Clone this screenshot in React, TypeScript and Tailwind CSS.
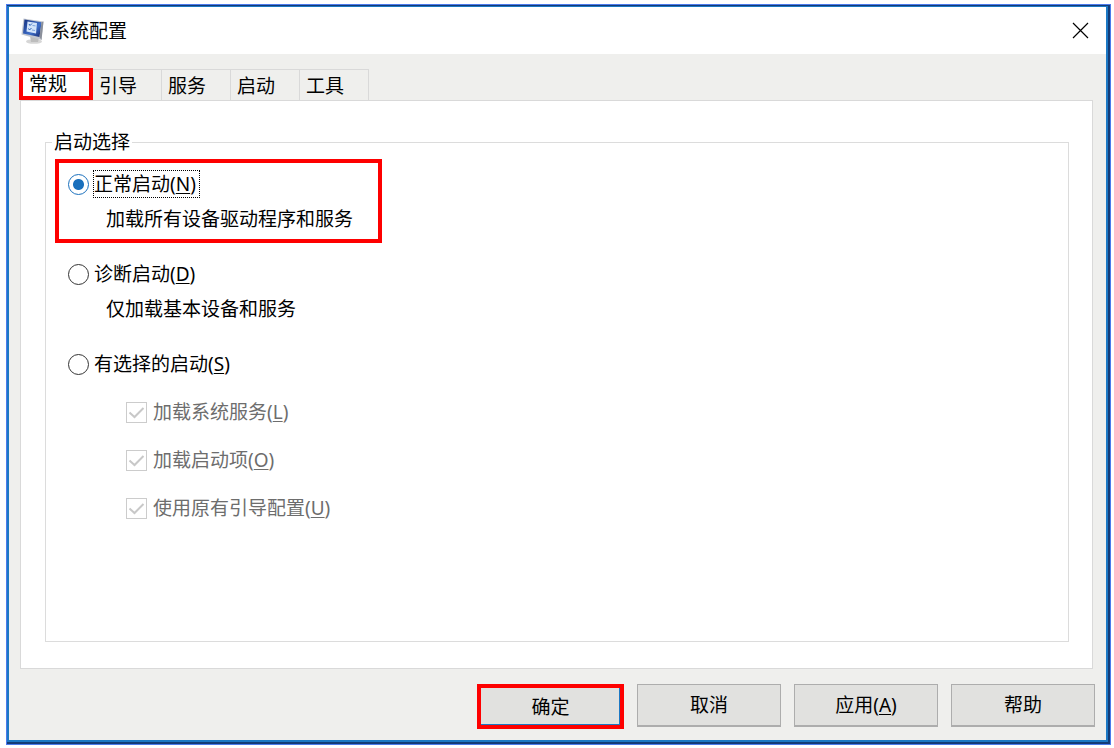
import React, { useState } from "react";

const tabs = ["常规", "引导", "服务", "启动", "工具"];

const modes = [
  { id: "normal", label: "正常启动", hotkey: "N", hint: "加载所有设备驱动程序和服务" },
  { id: "diagnostic", label: "诊断启动", hotkey: "D", hint: "仅加载基本设备和服务" },
  { id: "selective", label: "有选择的启动", hotkey: "S", hint: "" },
];

const selectiveItems = [
  { id: "services", label: "加载系统服务", hotkey: "L" },
  { id: "startup", label: "加载启动项", hotkey: "O" },
  { id: "boot", label: "使用原有引导配置", hotkey: "U" },
];

const Hotkey = ({ letter }: { letter: string }) => (
  <>
    (<span className="underline decoration-1 underline-offset-2">{letter}</span>)
  </>
);

const AppIcon = () => (
  <svg viewBox="0 0 24 26" className="h-[26px] w-6" aria-hidden="true">
    <defs>
      <linearGradient id="screen" x1="0" y1="0" x2="1" y2="1">
        <stop offset="0" stopColor="#14307f" />
        <stop offset="0.6" stopColor="#3f6fc9" />
        <stop offset="1" stopColor="#16266b" />
      </linearGradient>
    </defs>
    <ellipse cx="13" cy="23.500" rx="8" ry="2.300" fill="#d6d6d6" />
    <path d="M9 18l9 2-1 4h-7z" fill="#bdbdbd" />
    <path d="M2.500 0.500l20 3-2 18.500L.5 16.500z" fill="#c3c7cf" />
    <path d="M3.500 1.500l17 2.800-2 14.700L2 15.500z" fill="url(#screen)" />
    <path d="M6.500 3.500l9.500 1.500-1 10.500-9.500-2z" fill="#d3e4fa" />
    <path d="M8 6l1 1.500 2-2M7.500 10.500l1 1.500 2-2" fill="none" stroke="#2f62b5" />
    <path d="M11.500 7.500l3 .4M11 12l3 .5" fill="none" stroke="#7da4dc" />
    <path d="M20.500 4.300l2-.8-2 18.500-2-3z" fill="#8a8f9a" />
  </svg>
);

export default function App() {
  const [activeTab, setActiveTab] = useState(tabs[0]);
  const [mode, setMode] = useState("normal");

  return (
    <div className="flex min-h-screen bg-white pt-1 pr-[3px] pb-[3px] pl-1.5 font-['Noto_Sans','Noto_Sans_CJK_SC',sans-serif] text-[19px] leading-7 text-black">
      <div className="flex flex-1 border border-[#4b7bec] bg-[#143c78]">
        <div className="mt-px mr-0.5 mb-0.5 flex flex-1 flex-col border-2 border-t border-[#1c78c4] bg-[#efefed]">
          {/* Title bar */}
          <header className="flex h-[47px] items-center justify-between bg-white pr-[17px] pl-3">
            <div className="flex items-center gap-1.5">
              <AppIcon />
              <h1>系统配置</h1>
            </div>
            <button type="button" aria-label="关闭" className="p-0">
              <svg viewBox="0 0 17 17" className="size-[17px]" aria-hidden="true">
                <path d="M1 1l15 15M16 1L1 16" fill="none" stroke="#000" strokeWidth="1.2" />
              </svg>
            </button>
          </header>

          <main className="flex flex-1 flex-col pt-3.5 pr-[13px] pl-[11px]">
            {/* Tabs */}
            <div role="tablist" className="-ml-px flex h-8 items-end">
              {tabs.map((tab, index) => (
                <button
                  key={tab}
                  type="button"
                  role="tab"
                  aria-selected={activeTab === tab}
                  onClick={() => setActiveTab(tab)}
                  className={
                    index === 0
                      ? "h-8 w-[74px] border-4 border-[#fe0000] bg-white pl-1.5 text-left leading-6"
                      : "h-[31px] w-[69px] border-t border-r border-[#d9d9d9] pt-0.5 pl-1.5 text-left"
                  }
                >
                  {tab}
                </button>
              ))}
            </div>

            {/* General page */}
            <section role="tabpanel" className="flex flex-1 flex-col border border-[#d9d9d9] bg-white px-6 pt-[27px] pb-[26px]">
              <fieldset className="-mr-px flex-1 border border-[#dcdcdc] pb-28">
                <legend className="ml-1.5 px-0.5">启动选择</legend>

                <div className="mt-[3px] ml-[9px] flex flex-col items-start gap-1.5">
                  {modes.map((item) => (
                    <div
                      key={item.id}
                      className={`w-[327px] border-4 px-[9px] pt-[7px] pb-1.5 ${
                        item.id === "normal" ? "border-[#fe0000]" : "border-transparent"
                      }`}
                    >
                      <label className="flex items-center gap-1">
                        <input
                          type="radio"
                          name="mode"
                          value={item.id}
                          checked={mode === item.id}
                          onChange={() => setMode(item.id)}
                          className="size-[21px] appearance-none rounded-full border border-[#333] bg-white checked:border-[#1a70bd] checked:bg-[radial-gradient(circle,#1a70bd_5px,white_6px)]"
                        />
                        <span
                          className={
                            mode === item.id
                              ? "pr-1 pl-px outline-1 -outline-offset-1 outline-dotted outline-black"
                              : "pr-1 pl-px"
                          }
                        >
                          {item.label}
                          <Hotkey letter={item.hotkey} />
                        </span>
                      </label>
                      {item.hint && <p className="mt-[7px] pl-[38px]">{item.hint}</p>}
                    </div>
                  ))}
                </div>

                <div className="mt-2.5 flex flex-col gap-5 pl-20 text-[#6d6d6d]">
                  {selectiveItems.map((item) => (
                    <label key={item.id} className="flex items-center gap-1.5">
                      <span className="grid">
                        <input
                          type="checkbox"
                          defaultChecked
                          disabled
                          className="peer col-start-1 row-start-1 size-[21px] appearance-none border border-[#cccccc] bg-white"
                        />
                        <svg
                          viewBox="0 0 21 21"
                          className="invisible col-start-1 row-start-1 size-[21px] peer-checked:visible"
                          aria-hidden="true"
                        >
                          <path d="M3.500 10.500l5 4.500 9-9" fill="none" stroke="#c8c8c8" strokeWidth="2" />
                        </svg>
                      </span>
                      <span>
                        {item.label}
                        <Hotkey letter={item.hotkey} />
                      </span>
                    </label>
                  ))}
                </div>
              </fieldset>
            </section>
          </main>

          {/* Dialog buttons */}
          <footer className="flex items-start justify-end gap-[13px] pt-[15px] pr-[11px] pb-[11px]">
            <button type="button" className="h-[45px] w-[147px] border-4 border-[#fe0000] bg-[#e1e1df] shadow-[inset_-1px_-1px_0_#1c78c4]">
              确定
            </button>
            <button type="button" className="h-[43px] w-36 border border-b-2 border-[#adadad] bg-[#e1e1df]">
              取消
            </button>
            <button type="button" className="h-[43px] w-36 border border-b-2 border-[#adadad] bg-[#e1e1df]">
              应用
              <Hotkey letter="A" />
            </button>
            <button type="button" className="h-[43px] w-36 border border-b-2 border-[#adadad] bg-[#e1e1df]">
              帮助
            </button>
          </footer>
        </div>
      </div>
    </div>
  );
}
